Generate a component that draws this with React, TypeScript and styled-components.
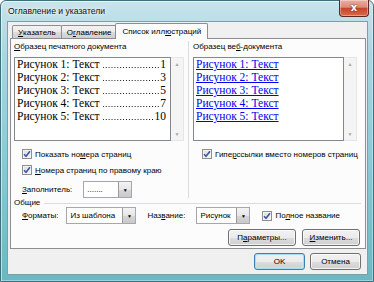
import React from "react";
import styled, { createGlobalStyle, css } from "styled-components";

const GlobalStyle = createGlobalStyle`
  html, body {
    margin: 0;
    padding: 0;
    width: 374px;
    height: 282px;
    overflow: hidden;
    background: #ffffff;
  }
  body {
    font-family: "Liberation Sans", Arial, sans-serif;
    font-size: 8px;
    color: #000;
  }
  * { box-sizing: border-box; }
`;

const Window = styled.div`
  width: 374px;
  height: 282px;
  display: flex;
  flex-direction: column;
  padding: 0 5px 6px 6px;
  border: 1px solid #3f6f7c;
  border-radius: 6px 6px 0 0;
  background: linear-gradient(180deg, #c6e4ec 0%, #a9d5e0 20%, #8ccad6 55%, #6bb8c2 100%);
  box-shadow: inset 1px 1px 0 rgba(255, 255, 255, 0.55), inset -1px -1px 0 rgba(255, 255, 255, 0.35);
`;

const TitleBar = styled.div`
  height: 20px;
  display: flex;
  align-items: flex-start;
  justify-content: space-between;
`;

const Title = styled.span`
  font-family: "Liberation Sans", Arial, sans-serif;
  font-size: 8.6px;
  color: #111;
  padding: 5px 0 0 1px;
  text-shadow: 0 0 6px #ffffff, 0 0 3px #ffffff;
`;

const CloseButton = styled.div`
  width: 30px;
  height: 17px;
  margin-top: -1px;
  margin-right: -1px;
  border: 1px solid #5b2a22;
  border-top: none;
  border-radius: 0 0 4px 4px;
  background: linear-gradient(180deg, #ecaea2 0%, #dd8a79 45%, #c8442c 52%, #d86a4c 100%);
  box-shadow: inset 0 0 0 1px rgba(255, 255, 255, 0.35);
  display: flex;
  align-items: center;
  justify-content: center;
  color: #fff;
  font-family: "DejaVu Sans", sans-serif;
  font-weight: bold;
  font-size: 10px;
  line-height: 1;
  text-shadow: 0 0 2px #6a1a0c;
`;

const Client = styled.div`
  flex: 1;
  display: flex;
  flex-direction: column;
  background: #f0f0f0;
  border: 1px solid #7f9ea9;
  padding: 1px 1px 4px 2px;
`;

const TabStrip = styled.div`
  display: flex;
  align-items: flex-end;
  height: 15px;
  padding-left: 2px;
`;

const Tab = styled.div<{ $active?: boolean }>`
  height: 13px;
  padding: 0 5px;
  display: flex;
  align-items: center;
  border: 1px solid #8c8e94;
  border-bottom: none;
  margin-right: -1px;
  border-radius: 2px 2px 0 0;
  background: linear-gradient(180deg, #f2f2f2 0%, #ebebeb 50%, #dddddd 51%, #cfcfcf 100%);
  ${({ $active }) =>
    $active &&
    css`
      margin-left: -1px;
      padding: 0 6px;
      background: #fcfcfc;
      position: relative;
      z-index: 1;
      margin-bottom: -1px;
      height: 16px;
    `}
`;

const Panel = styled.div`
  height: 211px;
  border: 1px solid #8c8e94;
  background: #fcfcfc;
  display: flex;
  flex-direction: column;
  padding: 2px 1px 3px 3px;
`;

const TopSection = styled.div`
  display: grid;
  grid-template-columns: 174px 178px;
  height: 156px;
`;

const Column = styled.div<{ $divided?: boolean }>`
  display: flex;
  flex-direction: column;
  min-width: 0;
  ${({ $divided }) =>
    $divided &&
    css`
      border-left: 1px solid #dcdcdc;
      padding-left: 4px;
    `}
`;

const Label = styled.div`
  height: 12px;
  line-height: 12px;
  margin-bottom: 4px;
  white-space: nowrap;
`;

const PreviewBox = styled.div<{ $w: number }>`
  display: flex;
  width: ${({ $w }) => $w}px;
  height: 84px;
`;

const PreviewList = styled.div`
  flex: 1;
  min-width: 0;
  background: #ffffff;
  border: 1px solid #828790;
  padding: 0 4px 0 2px;
  font-family: "Liberation Serif", "Times New Roman", serif;
  font-size: 11.5px;
  line-height: 13px;
`;

const Scroll = styled.div`
  width: 13px;
  flex: none;
  background: #f4f4f4;
  border: 1px solid #e6e6e6;
  border-left: none;
  display: flex;
  flex-direction: column;
  justify-content: space-between;
  align-items: center;
  padding: 3px 0;
  color: #a6a6a6;
  font-size: 5px;
  line-height: 6px;
`;

const TocLine = styled.div`
  display: flex;
  white-space: nowrap;
`;

/* dot leader drawn as a repeating background */
const Dots = styled.span`
  flex: 1;
  margin: 0 1px 0 3px;
  background-image: radial-gradient(circle, #111 0.55px, transparent 0.95px);
  background-size: 2.9px 3px;
  background-repeat: repeat-x;
  background-position: right bottom 2px;
`;

const LinkLine = styled.div`
  color: #0000ee;
  text-decoration: underline;
  white-space: nowrap;
`;

const CheckRow = styled.div<{ $indent: number; $mt?: number }>`
  display: flex;
  align-items: center;
  height: 14px;
  margin-top: ${({ $mt }) => $mt ?? 2}px;
  padding-left: ${({ $indent }) => $indent}px;
  gap: 3px;
  white-space: nowrap;
`;

const CheckBox = styled.span`
  width: 10px;
  height: 10px;
  border: 1px solid #8f8f8f;
  background: linear-gradient(135deg, #dcdcdc 0%, #f6f6f6 100%);
  box-shadow: inset 0 0 0 1px #f4f4f4;
  display: flex;
  align-items: center;
  justify-content: center;
`;

const FieldRow = styled.div<{ $indent: number; $mt?: number }>`
  display: flex;
  align-items: center;
  height: 17px;
  margin-top: ${({ $mt }) => $mt ?? 0}px;
  padding-left: ${({ $indent }) => $indent}px;
  white-space: nowrap;
`;

const Combo = styled.div<{ $w: number; $ml: number }>`
  width: ${({ $w }) => $w}px;
  margin-left: ${({ $ml }) => $ml}px;
  height: 17px;
  border: 1px solid #a7a6aa;
  background: #ffffff;
  display: flex;
  align-items: center;
  padding-left: 3px;
  justify-content: space-between;
`;

const DropButton = styled.span`
  width: 13px;
  height: 15px;
  border-left: 1px solid #9a9a9a;
  background: linear-gradient(180deg, #f3f3f3 0%, #e6e6e6 50%, #d6d6d6 51%, #c9c9c9 100%);
  display: flex;
  align-items: center;
  justify-content: center;
  font-size: 5px;
  color: #000;
`;

const GroupHeader = styled.div`
  display: flex;
  align-items: center;
  height: 10px;
  gap: 4px;
  margin-top: 1px;
  padding-right: 3px;
`;

const GroupLine = styled.div`
  flex: 1;
  height: 1px;
  background: #dcdcdc;
  margin-top: 1px;
`;

const ButtonRow = styled.div<{ $mt: number; $pr: number; $gap: number }>`
  display: flex;
  justify-content: flex-end;
  gap: ${({ $gap }) => $gap}px;
  margin-top: ${({ $mt }) => $mt}px;
  padding-right: ${({ $pr }) => $pr}px;
`;

const Button = styled.div<{ $w: number; $default?: boolean }>`
  width: ${({ $w }) => $w}px;
  height: 17px;
  border: 1px solid #707070;
  border-radius: 3px;
  background: linear-gradient(180deg, #f2f2f2 0%, #ebebeb 50%, #dddddd 51%, #cfcfcf 100%);
  box-shadow: inset 0 0 0 1px rgba(255, 255, 255, 0.7);
  display: flex;
  align-items: center;
  justify-content: center;
  white-space: nowrap;
  ${({ $default }) =>
    $default &&
    css`
      border-color: #3c7fb1;
      box-shadow: inset 0 0 0 1px #a8dcf3, inset 0 0 2px 1px #cfeefb;
    `}
`;

const U = styled.span`
  text-decoration: underline;
`;

const Check = () => (
  <CheckBox>
    <svg width="8" height="8" viewBox="0 0 8 8">
      <path d="M1 4.2 L3 6.3 L7 1.2" fill="none" stroke="#3d56a6" strokeWidth="1.6" />
    </svg>
  </CheckBox>
);

const toc = [
  ["Рисунок 1: Текст", "1"],
  ["Рисунок 2: Текст", "3"],
  ["Рисунок 3: Текст", "5"],
  ["Рисунок 4: Текст", "7"],
  ["Рисунок 5: Текст", "10"],
];

export default function App() {
  return (
    <>
      <GlobalStyle />
      <Window>
        <TitleBar>
          <Title>Оглавление и указатели</Title>
          <CloseButton>x</CloseButton>
        </TitleBar>
        <Client>
          <TabStrip>
            <Tab>
              <U>У</U>казатель
            </Tab>
            <Tab>
              О<U>г</U>лавление
            </Tab>
            <Tab $active>
              Список илл<U>ю</U>страций
            </Tab>
          </TabStrip>
          <Panel>
            <TopSection>
              <Column>
                <Label>
                  <U>О</U>бразец печатного документа
                </Label>
                <PreviewBox $w={170}>
                  <PreviewList>
                    {toc.map(([t, n]) => (
                      <TocLine key={t}>
                        {t}
                        <Dots />
                        {n}
                      </TocLine>
                    ))}
                  </PreviewList>
                  <Scroll>
                    <span>▲</span>
                    <span>▼</span>
                  </Scroll>
                </PreviewBox>
                <CheckRow $indent={8} $mt={6}>
                  <Check />
                  <span>
                    Показать но<U>м</U>ера страниц
                  </span>
                </CheckRow>
                <CheckRow $indent={8}>
                  <Check />
                  <span>
                    <U>Н</U>омера страниц по правому краю
                  </span>
                </CheckRow>
                <FieldRow $indent={8} $mt={4}>
                  <span>
                    <U>З</U>аполнитель:
                  </span>
                  <Combo $w={49} $ml={11}>
                    <span>.......</span>
                    <DropButton>▼</DropButton>
                  </Combo>
                </FieldRow>
              </Column>
              <Column $divided>
                <Label>
                  Образец ве<U>б</U>-документа
                </Label>
                <PreviewBox $w={164}>
                  <PreviewList>
                    {toc.map(([t]) => (
                      <LinkLine key={t}>{t}</LinkLine>
                    ))}
                  </PreviewList>
                  <Scroll>
                    <span>▲</span>
                    <span>▼</span>
                  </Scroll>
                </PreviewBox>
                <CheckRow $indent={9} $mt={6}>
                  <Check />
                  <span>
                    Гипе<U>р</U>ссылки вместо номеров страниц
                  </span>
                </CheckRow>
              </Column>
            </TopSection>
            <GroupHeader>
              <span>Общие</span>
              <GroupLine />
            </GroupHeader>
            <FieldRow $indent={8}>
              <span>
                <U>Ф</U>орматы:
              </span>
              <Combo $w={70} $ml={8}>
                <span>Из шаблона</span>
                <DropButton>▼</DropButton>
              </Combo>
              <span style={{ marginLeft: 11 }}>
                Наз<U>в</U>ание:
              </span>
              <Combo $w={54} $ml={11}>
                <span>Рисунок</span>
                <DropButton>▼</DropButton>
              </Combo>
              <CheckRow $indent={12} $mt={0}>
                <Check />
                <span>
                  По<U>л</U>ное название
                </span>
              </CheckRow>
            </FieldRow>
            <ButtonRow $mt={5} $pr={4} $gap={6}>
              <Button $w={68}>
                П<U>а</U>раметры...
              </Button>
              <Button $w={58}>
                <U>И</U>зменить...
              </Button>
            </ButtonRow>
          </Panel>
          <ButtonRow $mt={4} $pr={5} $gap={5}>
            <Button $w={51} $default>
              OK
            </Button>
            <Button $w={51}>Отмена</Button>
          </ButtonRow>
        </Client>
      </Window>
    </>
  );
}
